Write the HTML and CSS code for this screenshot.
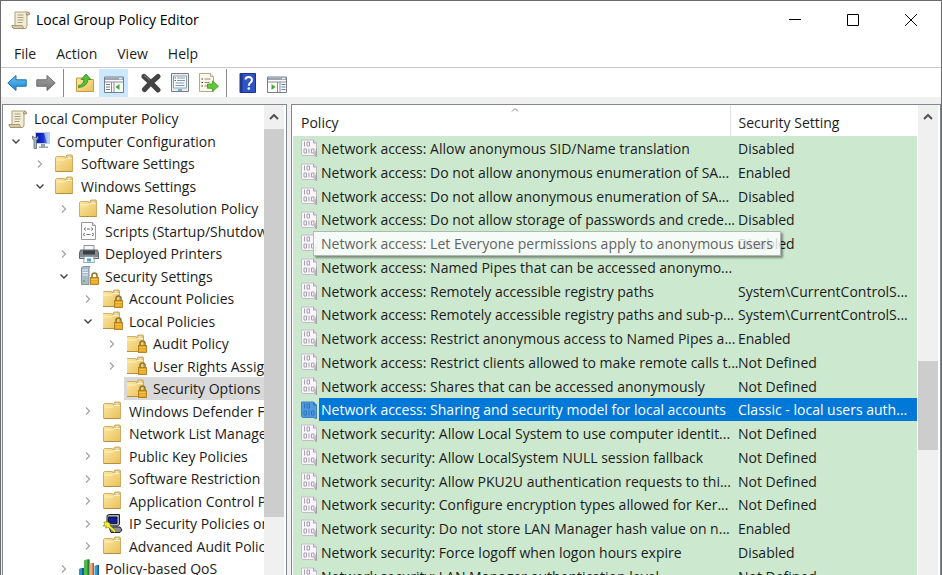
FILE: index.html
```html
<!DOCTYPE html>
<html lang="en">
<head>
    <meta charset="UTF-8">
    <meta name="viewport" content="width=device-width, initial-scale=1.0">
    <title>Local Group Policy Editor</title>
    <link rel="stylesheet" href="styles.css">
</head>
<body>

    <!-- Icon sprites -->
    <svg class="sprites" aria-hidden="true">
        <defs>
            <linearGradient id="gFolder" x1="0" y1="0" x2="1" y2="1"><stop offset="0" stop-color="#fde9a4"/><stop offset="1" stop-color="#e9c05a"/></linearGradient>
            <linearGradient id="gBlue" x1="0" y1="0" x2="0" y2="1"><stop offset="0" stop-color="#6cc3f3"/><stop offset="1" stop-color="#1787d3"/></linearGradient>
            <linearGradient id="gGray" x1="0" y1="0" x2="0" y2="1"><stop offset="0" stop-color="#a5a5a5"/><stop offset="1" stop-color="#737373"/></linearGradient>
            <linearGradient id="gScreen" x1="0" y1="0" x2="1" y2="0"><stop offset="0" stop-color="#0a14a8"/><stop offset=".55" stop-color="#1530d8"/><stop offset="1" stop-color="#9cc0f0"/></linearGradient>
        </defs>
        <symbol id="scroll" viewBox="0 0 20 20">
            <path d="M4 2h13q1.500.5 1.500 2.500l-2.500.5v11q0 2.500-2 2.500H3q-2-.5-2-3h3z" fill="#f3ecd2" stroke="#a89f80"/>
            <path d="M15.500 5q-.5-2.500 1.500-3 1.500.5 1.500 2.500zM1 15.500h10.500q0 2 2 3H3q-2-.5-2-3z" fill="#d6cba4" stroke="#978d6c" stroke-width=".8"/>
            <path d="M6.500 5h6M6.500 7.500h6M6.500 10h6M6.500 12.500h5" stroke="#a59e88"/>
        </symbol>
        <symbol id="folder" viewBox="0 0 20 20">
            <path d="M.5 17.500V3.500l1-1h8l1 1.500h.5V2l1-1h5l.5 1v15.500z" fill="url(#gFolder)" stroke="#c9a65c" stroke-width=".9"/>
            <path d="M12 2h4v2h-4z" fill="#fff8df" stroke="#c0a368" stroke-width=".6"/>
            <path d="M1.500 6h8l1.500-1.500h5.500" fill="none" stroke="#fff3c4"/>
            <path d="M1 17.500h16.500" stroke="#b48f45"/>
        </symbol>
        <symbol id="lock" viewBox="0 0 20 20">
            <path d="M13 12V9.500q0-2.500 2.500-2.500T18 9.500V12" fill="none" stroke="#8f7636" stroke-width="1.600"/>
            <rect x="11.500" y="11.500" width="8" height="7" fill="#e6a51e" stroke="#a87416" stroke-width=".8"/>
            <path d="M12.500 13.500h6M12.500 16h6" stroke="#f8cf62" stroke-width=".8"/>
        </symbol>
        <symbol id="lockedFolder" viewBox="0 0 20 20"><use href="#folder" x="-1" width="20" height="20"/><use href="#lock"/></symbol>
        <symbol id="computer" viewBox="0 0 20 20">
            <path d="M4.500 1.500h14v11h-14z" fill="url(#gScreen)" stroke="#c7ccd4"/>
            <path d="M13 2h5v10h-2z" fill="#dcebfa" opacity=".6"/>
            <path d="M10 13h4v2.500h3v1.500H8v-1.500h2z" fill="#9ba1a8"/>
            <path d="M1.500 5v3l1.500 1v8.500h2.500V9L7 8V5L5.500 6.500h-2z" fill="#a9b7c4" stroke="#53697f" stroke-width=".8"/>
        </symbol>
        <symbol id="script" viewBox="0 0 20 20">
            <path d="M2.500 1.500h11l3 3v14h-14z" fill="#fcfcfc" stroke="#999"/>
            <path d="M13.500 1.500v3h3" fill="#ddd" stroke="#999"/>
            <path d="M7 6.500 5 8l2 1.500M12 6.500 14 8l-2 1.500M8 8h3M6 12l-2 1.500L6 15M13 12l2 1.500-2 1.500M7.500 13.500h4" fill="none" stroke="#777"/>
        </symbol>
        <symbol id="printer" viewBox="0 0 20 20">
            <path d="M5 1.500h10V7H5z" fill="#f3f5f7" stroke="#8d949b"/>
            <path d="M1.500 6h17l1 3v5.500H.5V9z" fill="#838a91" stroke="#60666c"/>
            <path d="M4 6.500h12v4H4z" fill="#3b4045"/>
            <path d="M1 13.500h18" stroke="#c7ccd0"/>
            <path d="M5.500 12.500h9l1 6h-11z" fill="#fff" stroke="#7793a8" stroke-width=".8"/>
            <path d="M8 14.500h4v3H8z" fill="#4aa0d8"/>
        </symbol>
        <symbol id="server" viewBox="0 0 20 20">
            <path d="M2.500 1.500 5 .5h6l-1 1.500v16.500H2.500z" fill="#a9bac8" stroke="#6f8292" stroke-width=".8"/>
            <path d="M3.500 4h5.500M3.500 6.500h5.500M3.500 9h5.500" stroke="#e9f1f7"/>
            <path d="M4 14h2v2H4z" fill="#5cc04e"/>
            <use href="#lock"/>
        </symbol>
        <symbol id="ipsec" viewBox="0 0 20 20">
            <path d="M4 1.500 6 .5h10.500v10L14.500 12H4z" fill="#a9aebb" stroke="#222"/>
            <path d="M5.500 3h8.500v6.500H5.500z" fill="#10209c" stroke="#000" stroke-width=".7"/>
            <path d="M6 13h11l2 3-2 2.500H8z" fill="#8a8d9a" stroke="#222"/>
            <path d="M1 8h4l2 1.500v2l6 5.500-1.500 1.500-6-5-3 .5 1-2H0L1.500 11z" fill="#f6f22b" stroke="#77750d" stroke-width=".6"/>
        </symbol>
        <symbol id="bars" viewBox="0 0 20 20">
            <path d="M0 10l2-1h3v11H0z" fill="#2591cf"/><path d="M3 9h2v11H3z" fill="#125f91"/>
            <path d="M5 1.500 7 .5h3.500V20H5z" fill="#4dbb4b"/><path d="M8.500.5h2V20h-2z" fill="#237d32"/>
            <path d="M10.500 5l2-1H15v16h-4.500z" fill="#f2a67a"/><path d="M13.500 4H15v16h-1.500z" fill="#b85a38"/>
            <path d="M15.500 7l2-1H20v14h-4.500z" fill="#3c9dd5"/><path d="M18.500 6H20v14h-1.500z" fill="#145b91"/>
        </symbol>
        <symbol id="policy" viewBox="0 0 16 18">
            <path d="M.5 1h12l3 3v13.500l-3.500-1H1.500L.5 15z" fill="#f8f6fa" stroke="#c2bec6"/>
            <path d="M12.500 1v3h3" fill="#d9d6dd" stroke="#aaa6af"/>
            <path d="M13 15l2.500 2.500V9" fill="#bbb" stroke="#999" stroke-width=".7"/>
            <g fill="none" stroke="#a79eb0"><path d="M3.500 2.500v5M6 3h2.500v4H6zM3 10h2.500v4H3zM8 9.500v5M10.500 10h2.500v4h-2.500z"/></g>
        </symbol>
        <symbol id="policySelected" viewBox="0 0 16 18">
            <path d="M.5 1h12l3 3v13.500l-3.500-1H1.500L.5 15z" fill="#4f9add" stroke="#3f83c2"/>
            <path d="M12.500 1v3h3" fill="#3a86cc" stroke="#3578b6"/>
            <g fill="none" stroke="#2c74ba"><path d="M3.500 2.500v5M6 3h2.500v4H6zM3 10h2.500v4H3zM8 9.500v5M10.500 10h2.500v4h-2.500z"/></g>
        </symbol>
        <symbol id="back" viewBox="0 0 20 20"><path d="M.8 10 9 2.500v4.300h10.200v6.400H9v4.300z" fill="url(#gBlue)" stroke="#1c6fae" stroke-linejoin="round"/></symbol>
        <symbol id="forward" viewBox="0 0 20 20"><path d="M19.200 10 11 2.500v4.300H.8v6.400H11v4.300z" fill="url(#gGray)" stroke="#6a6a6a" stroke-linejoin="round"/></symbol>
        <symbol id="up" viewBox="0 0 20 20">
            <path d="M1.500 18.500V5h6L9 6.500h9.500v12z" fill="url(#gFolder)" stroke="#c59b43"/>
            <path d="M3.500 12.500q5-.5 5.500-6H6L11 1l5 5.500h-3q-1 7.500-9.500 8z" fill="#58bd38" stroke="#348a1c" stroke-width=".8"/>
        </symbol>
        <symbol id="paneLeft" viewBox="0 0 20 20">
            <path d="M.5 4h19v15.500H.5z" fill="#fdfdfd" stroke="#777e87"/><path d="M1 4.500h18V7H1z" fill="#9ba4af"/><path d="M15 5.700h3" stroke="#fff"/>
            <path d="M1 9h18M7.500 9v10M10 9v10" stroke="#858d96"/><path d="M2 11.500h4M2 14h4M2 16.500h4" stroke="#5d7fa8"/>
            <path d="M15.500 11v6L11.500 14z" fill="#3eae28"/>
        </symbol>
        <symbol id="paneRight" viewBox="0 0 20 20">
            <path d="M.5 4h19v15.500H.5z" fill="#fdfdfd" stroke="#777e87"/><path d="M1 4.500h18V7H1z" fill="#9ba4af"/><path d="M15 5.700h3" stroke="#fff"/>
            <path d="M1 9h18M10.500 9v10M13 9v10" stroke="#858d96"/><path d="M14.500 11.500h4M14.500 14h4M14.500 16.500h4" stroke="#5d7fa8"/>
            <path d="M4.500 11v6l4-3z" fill="#3eae28"/>
        </symbol>
        <symbol id="delete" viewBox="0 0 20 20"><path d="M3 3.500q7 6 14 13.500M17 3.500Q9.500 9.500 3.500 16.500" fill="none" stroke="#444" stroke-width="5" stroke-linecap="round"/><path d="M3 2.500q3 2 5.500 4.500" fill="none" stroke="#8a8a8a"/></symbol>
        <symbol id="properties" viewBox="0 0 20 20">
            <path d="M1.500.5h17v18h-17z" fill="#ececec" stroke="#7d7d7d"/><path d="M3.500 3h13v12h-13z" fill="#fff" stroke="#8aa0b4"/>
            <path d="M7 5h8M7 7.500h8M5.500 10h9M5.500 12.500h9" stroke="#7e97ae"/><path d="M4.500 5h1.500M4.500 7.500h1.500" stroke="#2f77bb"/><path d="M8 17h4" stroke="#39a2d8" stroke-width="1.500"/>
        </symbol>
        <symbol id="export" viewBox="0 0 20 20">
            <path d="M.5.5h11l3 3v15H.5z" fill="#fdf9e4" stroke="#b2aa8c"/><path d="M11.500.5v3h3" fill="#eee" stroke="#b2aa8c"/>
            <path d="M2.500 6h1.500M2.500 9.500h1.500M2.500 13h1.500" stroke="#333"/><path d="M5.500 6h6M5.500 9.500h5M5.500 13h4" stroke="#8a87a0"/>
            <path d="M8.500 11h5V8l6 5.200-6 5.300v-3.200h-5z" fill="#62c93b" stroke="#3f9a20" stroke-width=".8"/>
        </symbol>
        <symbol id="help" viewBox="0 0 20 20">
            <path d="M2 .5h15.500v19H2z" fill="#2f55c5" stroke="#1b3587"/><path d="M2 .5h2.500v19H2z" fill="#20398e"/>
            <path d="M7.500 6.500Q7.700 4 10.700 4T14 6.800q0 1.700-1.700 2.900-1.500 1.100-1.500 3" fill="none" stroke="#fff" stroke-width="2"/><circle cx="10.800" cy="15.500" r="1.300" fill="#fff"/>
        </symbol>
        <symbol id="right" viewBox="0 0 16 16"><path d="M6 4.500 9.500 8 6 11.500" fill="none" stroke="#a6a6a6" stroke-width="1.300"/></symbol>
        <symbol id="down" viewBox="0 0 16 16"><path d="M4.500 6.500 8 10l3.500-3.500" fill="none" stroke="#404040" stroke-width="1.400"/></symbol>
    </svg>

    <div class="window">
        <header class="titlebar">
            <svg class="icon"><use href="#scroll"/></svg>
            <h1>Local Group Policy Editor</h1>
            <div class="window-buttons">
                <button aria-label="Minimize"><svg viewBox="0 0 12 12"><path d="M0 5.500h12"/></svg></button>
                <button aria-label="Maximize"><svg viewBox="0 0 12 12"><path d="M.5.5h11v11H.5z"/></svg></button>
                <button aria-label="Close"><svg viewBox="0 0 12 12"><path d="M0 0l12 12M12 0 0 12"/></svg></button>
            </div>
        </header>

        <nav class="menubar">
            <button>File</button>
            <button>Action</button>
            <button>View</button>
            <button>Help</button>
        </nav>

        <div class="toolbar">
            <div class="tools">
                <button aria-label="Back"><svg class="icon"><use href="#back"/></svg></button>
                <button aria-label="Forward"><svg class="icon"><use href="#forward"/></svg></button>
            </div>
            <div class="tools divided">
                <button aria-label="Up one level"><svg class="icon"><use href="#up"/></svg></button>
                <button class="active" aria-label="Show console tree"><svg class="icon"><use href="#paneLeft"/></svg></button>
            </div>
            <div class="tools">
                <button aria-label="Delete"><svg class="icon"><use href="#delete"/></svg></button>
                <button aria-label="Properties"><svg class="icon"><use href="#properties"/></svg></button>
                <button aria-label="Export list"><svg class="icon"><use href="#export"/></svg></button>
            </div>
            <div class="tools divided">
                <button aria-label="Help"><svg class="icon"><use href="#help"/></svg></button>
                <button aria-label="Show action pane"><svg class="icon"><use href="#paneRight"/></svg></button>
            </div>
        </div>

        <main class="panes">
            <section class="pane tree-pane">
                <ul class="tree">
                    <li class="level-0"><span class="node"><svg class="icon"><use href="#scroll"/></svg>Local Computer Policy</span></li>
                    <li class="level-1"><svg class="arrow"><use href="#down"/></svg><span class="node"><svg class="icon"><use href="#computer"/></svg>Computer Configuration</span></li>
                    <li class="level-2"><svg class="arrow"><use href="#right"/></svg><span class="node"><svg class="icon"><use href="#folder"/></svg>Software Settings</span></li>
                    <li class="level-2"><svg class="arrow"><use href="#down"/></svg><span class="node"><svg class="icon"><use href="#folder"/></svg>Windows Settings</span></li>
                    <li class="level-3"><svg class="arrow"><use href="#right"/></svg><span class="node"><svg class="icon"><use href="#folder"/></svg>Name Resolution Policy</span></li>
                    <li class="level-3"><svg class="arrow"></svg><span class="node"><svg class="icon"><use href="#script"/></svg>Scripts (Startup/Shutdown)</span></li>
                    <li class="level-3"><svg class="arrow"><use href="#right"/></svg><span class="node"><svg class="icon"><use href="#printer"/></svg>Deployed Printers</span></li>
                    <li class="level-3"><svg class="arrow"><use href="#down"/></svg><span class="node"><svg class="icon"><use href="#server"/></svg>Security Settings</span></li>
                    <li class="level-4"><svg class="arrow"><use href="#right"/></svg><span class="node"><svg class="icon"><use href="#lockedFolder"/></svg>Account Policies</span></li>
                    <li class="level-4"><svg class="arrow"><use href="#down"/></svg><span class="node"><svg class="icon"><use href="#lockedFolder"/></svg>Local Policies</span></li>
                    <li class="level-5"><svg class="arrow"><use href="#right"/></svg><span class="node"><svg class="icon"><use href="#lockedFolder"/></svg>Audit Policy</span></li>
                    <li class="level-5"><svg class="arrow"><use href="#right"/></svg><span class="node"><svg class="icon"><use href="#lockedFolder"/></svg>User Rights Assignment</span></li>
                    <li class="level-5"><svg class="arrow"></svg><span class="node selected"><svg class="icon"><use href="#lockedFolder"/></svg>Security Options</span></li>
                    <li class="level-4"><svg class="arrow"><use href="#right"/></svg><span class="node"><svg class="icon"><use href="#folder"/></svg>Windows Defender Firewall</span></li>
                    <li class="level-4"><svg class="arrow"></svg><span class="node"><svg class="icon"><use href="#folder"/></svg>Network List Manager Policies</span></li>
                    <li class="level-4"><svg class="arrow"><use href="#right"/></svg><span class="node"><svg class="icon"><use href="#folder"/></svg>Public Key Policies</span></li>
                    <li class="level-4"><svg class="arrow"><use href="#right"/></svg><span class="node"><svg class="icon"><use href="#folder"/></svg>Software Restriction Policies</span></li>
                    <li class="level-4"><svg class="arrow"><use href="#right"/></svg><span class="node"><svg class="icon"><use href="#folder"/></svg>Application Control Policies</span></li>
                    <li class="level-4"><svg class="arrow"><use href="#right"/></svg><span class="node"><svg class="icon"><use href="#ipsec"/></svg>IP Security Policies on Local Computer</span></li>
                    <li class="level-4"><svg class="arrow"><use href="#right"/></svg><span class="node"><svg class="icon"><use href="#folder"/></svg>Advanced Audit Policy Configuration</span></li>
                    <li class="level-3"><svg class="arrow"><use href="#right"/></svg><span class="node"><svg class="icon"><use href="#bars"/></svg>Policy-based QoS</span></li>
                </ul>
                <div class="scrollbar tree-scroll">
                    <button aria-label="Scroll up"><svg viewBox="0 0 10 6"><path d="M1 5l4-4 4 4"/></svg></button>
                    <div class="thumb"></div>
                    <div class="after"></div>
                </div>
            </section>

            <section class="pane list-pane">
                <div class="list">
                    <table>
                        <thead>
                            <tr>
                                <th class="col-policy">Policy<svg class="sort" viewBox="0 0 8 4"><path d="M1 3.500 4 .5l3 3"/></svg></th>
                                <th class="col-setting">Security Setting</th>
                            </tr>
                        </thead>
                        <tbody>
                            <tr><td><div class="policy"><svg><use href="#policy"/></svg><span>Network access: Allow anonymous SID/Name translation</span></div></td><td>Disabled</td></tr>
                            <tr><td><div class="policy"><svg><use href="#policy"/></svg><span>Network access: Do not allow anonymous enumeration of SA...</span></div></td><td>Enabled</td></tr>
                            <tr><td><div class="policy"><svg><use href="#policy"/></svg><span>Network access: Do not allow anonymous enumeration of SA...</span></div></td><td>Disabled</td></tr>
                            <tr><td><div class="policy"><svg><use href="#policy"/></svg><span>Network access: Do not allow storage of passwords and crede...</span></div></td><td>Disabled</td></tr>
                            <tr><td><div class="policy"><svg><use href="#policy"/></svg><span class="tooltip">Network access: Let Everyone permissions apply to anonymous users</span></div></td><td>Disabled</td></tr>
                            <tr><td><div class="policy"><svg><use href="#policy"/></svg><span>Network access: Named Pipes that can be accessed anonymo...</span></div></td><td></td></tr>
                            <tr><td><div class="policy"><svg><use href="#policy"/></svg><span>Network access: Remotely accessible registry paths</span></div></td><td>System\CurrentControlS...</td></tr>
                            <tr><td><div class="policy"><svg><use href="#policy"/></svg><span>Network access: Remotely accessible registry paths and sub-p...</span></div></td><td>System\CurrentControlS...</td></tr>
                            <tr><td><div class="policy"><svg><use href="#policy"/></svg><span>Network access: Restrict anonymous access to Named Pipes a...</span></div></td><td>Enabled</td></tr>
                            <tr><td><div class="policy"><svg><use href="#policy"/></svg><span>Network access: Restrict clients allowed to make remote calls t...</span></div></td><td>Not Defined</td></tr>
                            <tr><td><div class="policy"><svg><use href="#policy"/></svg><span>Network access: Shares that can be accessed anonymously</span></div></td><td>Not Defined</td></tr>
                            <tr class="selected"><td><div class="policy"><svg><use href="#policySelected"/></svg><span>Network access: Sharing and security model for local accounts</span></div></td><td>Classic - local users auth...</td></tr>
                            <tr><td><div class="policy"><svg><use href="#policy"/></svg><span>Network security: Allow Local System to use computer identit...</span></div></td><td>Not Defined</td></tr>
                            <tr><td><div class="policy"><svg><use href="#policy"/></svg><span>Network security: Allow LocalSystem NULL session fallback</span></div></td><td>Not Defined</td></tr>
                            <tr><td><div class="policy"><svg><use href="#policy"/></svg><span>Network security: Allow PKU2U authentication requests to thi...</span></div></td><td>Not Defined</td></tr>
                            <tr><td><div class="policy"><svg><use href="#policy"/></svg><span>Network security: Configure encryption types allowed for Ker...</span></div></td><td>Not Defined</td></tr>
                            <tr><td><div class="policy"><svg><use href="#policy"/></svg><span>Network security: Do not store LAN Manager hash value on n...</span></div></td><td>Enabled</td></tr>
                            <tr><td><div class="policy"><svg><use href="#policy"/></svg><span>Network security: Force logoff when logon hours expire</span></div></td><td>Disabled</td></tr>
                            <tr><td><div class="policy"><svg><use href="#policy"/></svg><span>Network security: LAN Manager authentication level</span></div></td><td>Not Defined</td></tr>
                        </tbody>
                    </table>
                </div>
                <div class="scrollbar list-scroll">
                    <button aria-label="Scroll up"><svg viewBox="0 0 10 6"><path d="M1 5l4-4 4 4"/></svg></button>
                    <div class="before"></div>
                    <div class="thumb"></div>
                    <div class="after"></div>
                </div>
            </section>
        </main>
    </div>

</body>
</html>
```
FILE: styles.css
```css
* {
    box-sizing: border-box;
}
body {
    margin: 0;
    font-family: "Open Sans", "Noto Sans", sans-serif;
    font-size: 14px;
    color: #1c1c1c;
}
button {
    padding: 0;
    border: none;
    background: none;
    font: inherit;
    color: inherit;
}
svg {
    flex: none;
}
.sprites {
    position: absolute;
    width: 0;
    height: 0;
}
.icon {
    width: 20px;
    height: 20px;
}
.window {
    display: flex;
    flex-direction: column;
    height: 100vh;
    overflow: hidden;
    border: 1px solid #6b6b6b;
    border-bottom: none;
    background-color: white;
}

/* Title bar */
.titlebar {
    display: flex;
    align-items: center;
    height: 37px;
    padding: 0 1px 0 10px;
}
.titlebar h1 {
    flex: 1;
    margin: 0 0 0 5px;
    font-size: 14px;
    font-weight: normal;
    color: black;
}
.window-buttons {
    display: flex;
}
.window-buttons button {
    display: flex;
    align-items: center;
    justify-content: center;
    width: 58px;
    height: 37px;
}
.window-buttons svg {
    width: 12px;
    height: 12px;
    fill: none;
    stroke: black;
    overflow: visible;
}

/* Menu and toolbar */
.menubar {
    display: flex;
    gap: 20px;
    height: 30px;
    padding: 2px 0 0 13px;
    border-bottom: 1px solid #c8c8c8;
}
.toolbar {
    display: flex;
    align-items: center;
    gap: 8px;
    height: 29px;
    padding-left: 1px;
}
.tools {
    display: flex;
}
.tools button {
    display: flex;
    align-items: center;
    justify-content: center;
    width: 29px;
    height: 28px;
}
.tools .active {
    background-color: #cce8ff;
}
.divided {
    margin-left: -5px;
    padding-left: 6px;
    border-left: 1px solid #8a8a8a;
}

/* Panes */
.panes {
    display: flex;
    flex: 1;
    gap: 4px;
    min-height: 0;
    padding: 7px 0 0 1px;
    background-color: #f0f0f0;
}
.pane {
    display: flex;
    min-width: 0;
    border: 1px solid #828790;
    border-bottom: none;
    background-color: white;
}
.tree-pane {
    flex: none;
    width: 285px;
}
.list-pane {
    flex: 1;
    padding-left: 1px;
}

/* Console tree */
.tree {
    flex: 1;
    min-width: 0;
    margin: 0;
    padding: 2px 0 0;
    list-style: none;
    overflow: hidden;
}
.tree li {
    display: flex;
    height: 23px;
    white-space: nowrap;
}
.tree li:nth-child(even) {
    height: 22px;
}
.level-0 { padding-left: 2px; }
.level-1 { padding-left: 5px; }
.level-2 { padding-left: 29px; }
.level-3 { padding-left: 53px; }
.level-4 { padding-left: 77px; }
.level-5 { padding-left: 101px; }
.arrow {
    align-self: center;
    width: 16px;
    height: 16px;
    margin-right: 4px;
}
.node {
    display: flex;
    flex: 1;
    align-items: center;
    gap: 6px;
    padding-left: 3px;
}
.node.selected {
    background-color: #d9d9d9;
}

/* Scrollbars */
.scrollbar {
    display: flex;
    flex-direction: column;
    flex: none;
    width: 22px;
    border-right: 2px solid white;
    background-color: #f0f0f0;
}
.scrollbar button {
    display: flex;
    align-items: center;
    justify-content: center;
    height: 24px;
}
.scrollbar svg {
    width: 10px;
    height: 6px;
    fill: none;
    stroke: #505050;
    stroke-width: 2;
}
.thumb {
    background-color: #cdcdcd;
}
.tree-scroll .thumb { flex: 87; }
.tree-scroll .after { flex: 13; }
.list-scroll .before { flex: 52; }
.list-scroll .thumb { flex: 20; }
.list-scroll .after { flex: 28; }

/* Policy list */
.list {
    flex: 1;
    min-width: 0;
    overflow: hidden;
    border-right: 1px solid white;
    background-color: #cce8cf;
}
table {
    width: 100%;
    table-layout: fixed;
    border-collapse: collapse;
}
th {
    position: relative;
    height: 31px;
    padding: 3px 8px 0;
    background-color: white;
    font-weight: normal;
    text-align: left;
}
.col-policy {
    border-right: 1px solid #e2e2e2;
}
.col-setting {
    width: 187px;
}
.sort {
    position: absolute;
    top: 3px;
    left: 50%;
    width: 8px;
    height: 4px;
    fill: none;
    stroke: #808080;
}
td {
    height: 24px;
    padding: 0;
    line-height: 23px;
    white-space: nowrap;
}
tr:nth-child(4n) td {
    height: 23px;
}
td + td {
    padding-left: 8px;
}
.policy {
    position: relative;
    display: flex;
    align-items: center;
    height: 23px;
    padding-left: 8px;
}
.policy svg {
    width: 16px;
    height: 18px;
    margin-right: 2px;
}
.policy span {
    flex: 1;
    padding-left: 2px;
}
.selected .policy span,
.selected td + td {
    background-color: #0078d7;
    color: white;
}
.policy .tooltip {
    position: absolute;
    top: -1px;
    left: 20px;
    z-index: 1;
    padding: 0 7px;
    border: 1px solid #b0b8b0;
    background-color: rgba(255, 255, 255, 0.8);
    box-shadow: 2px 2px 2px rgba(0, 0, 0, 0.4);
    color: #636363;
}
```
